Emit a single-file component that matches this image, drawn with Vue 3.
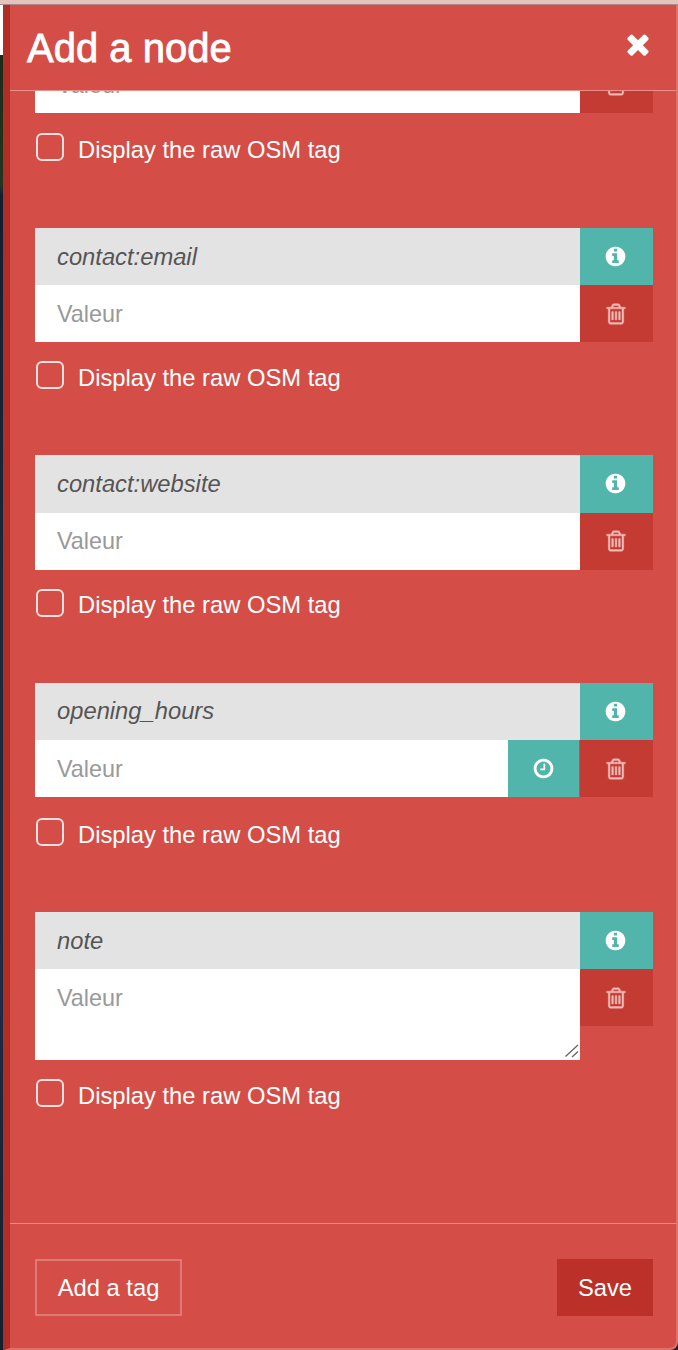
<script setup>
const fields = [
  { key: 'contact:phone', clipped: true },
  { key: 'contact:email' },
  { key: 'contact:website' },
  { key: 'opening_hours', hours: true },
  { key: 'note', multiline: true }
]

const trashPath = 'M704 736v576q0 14-9 23t-23 9h-64q-14 0-23-9t-9-23v-576q0-14 9-23t23-9h64q14 0 23 9t9 23zm256 0v576q0 14-9 23t-23 9h-64q-14 0-23-9t-9-23v-576q0-14 9-23t23-9h64q14 0 23 9t9 23zm256 0v576q0 14-9 23t-23 9h-64q-14 0-23-9t-9-23v-576q0-14 9-23t23-9h64q14 0 23 9t9 23zm128 724v-948h-896v948q0 22 7 40.5t14.5 27 10.5 8.5h832q3 0 10.5-8.5t14.5-27 7-40.5zm-672-1076h448l-48-117q-7-9-17-11h-317q-10 2-17 11zm928 32v64q0 14-9 23t-23 9h-96v948q0 83-47 143.5t-113 60.5h-832q-66 0-113-58.5t-47-141.5v-952h-96q-14 0-23-9t-9-23v-64q0-14 9-23t23-9h309l70-167q15-37 54-63t79-26h320q40 0 79 26t54 63l70 167h309q14 0 23 9t9 23z'
const infoPath = 'M1152 1376v-160q0-14-9-23t-23-9h-96v-512q0-14-9-23t-23-9h-320q-14 0-23 9t-9 23v160q0 14 9 23t23 9h96v320h-96q-14 0-23 9t-9 23v160q0 14 9 23t23 9h448q14 0 23-9t9-23zm-128-896v-160q0-14-9-23t-23-9h-192q-14 0-23 9t-9 23v160q0 14 9 23t23 9h192q14 0 23-9t9-23zm640 416q0 209-103 385.5t-279.5 279.5-385.5 103-385.5-103-279.5-279.5-103-385.5 103-385.5 279.5-279.5 385.5-103 385.5 103 279.5 279.5 103 385.5z'
const clockPath = 'M1024 544v448q0 14-9 23t-23 9h-320q-14 0-23-9t-9-23v-64q0-14 9-23t23-9h224v-352q0-14 9-23t23-9h64q14 0 23 9t9 23zm416 352q0-148-73-273t-198-198-273-73-273 73-198 198-73 273 73 273 198 198 273 73 273-73 198-198 73-273zm224 0q0 209-103 385.5t-279.5 279.5-385.5 103-385.5-103-279.5-279.5-103-385.5 103-385.5 279.5-279.5 385.5-103 385.5 103 279.5 279.5 103 385.5z'
const timesPath = 'M1490 1322q0 40-28 68l-136 136q-28 28-68 28t-68-28l-294-294-294 294q-28 28-68 28t-68-28l-136-136q-28-28-28-68t28-68l294-294-294-294q-28-28-28-68t28-68l136-136q28-28 68-28t68 28l294 294 294-294q28-28 68-28t68 28l136 136q28 28 28 68t-28 68l-294 294 294 294q28 28 28 68z'
</script>

<template>
  <div class="page">
    <div class="top-strip"></div>
    <div class="main">
      <div class="map-edge"></div>
      <div class="modal">
        <header class="modal-head">
          <h1 class="title">Add a node</h1>
          <button class="close" type="button" aria-label="Close">
            <svg viewBox="0 0 1792 1792" width="32" height="32"><path :d="timesPath" fill="#fff" /></svg>
          </button>
        </header>

        <div class="modal-body">
          <div v-for="field in fields" :key="field.key" class="tag" :class="{ first: field.clipped, 'with-hours': field.hours }">
            <div class="tag-grid">
              <template v-if="!field.clipped">
                <div class="tag-key">{{ field.key }}</div>
                <button class="btn-info" type="button">
                  <svg viewBox="0 0 1792 1792" width="23" height="23"><path :d="infoPath" fill="#fff" /></svg>
                </button>
              </template>
              <div v-if="field.multiline" class="area-wrap">
                <textarea class="tag-value tall" placeholder="Valeur"></textarea>
                <svg class="grip" viewBox="0 0 14 14" width="14" height="14">
                  <path d="M0.5 12.5 L13 1 M7 13 L13 7.5" stroke="#666" stroke-width="1.3" fill="none" />
                </svg>
              </div>
              <div v-else class="value-row">
                <input class="tag-value" type="text" placeholder="Valeur" />
                <button v-if="field.hours" class="btn-clock" type="button">
                  <svg viewBox="0 0 1792 1792" width="23" height="23"><path :d="clockPath" fill="#fff" /></svg>
                </button>
              </div>
              <button class="btn-trash" type="button">
                <svg viewBox="0 0 1792 1792" width="24" height="24"><path :d="trashPath" fill="#f3bcb8" stroke="#f3bcb8" stroke-width="30" /></svg>
              </button>
            </div>
            <label class="raw">
              <input class="raw-check" type="checkbox" />
              <span class="raw-text">Display the raw OSM tag</span>
            </label>
          </div>
        </div>

        <footer class="modal-foot">
          <button class="btn-add" type="button">Add a tag</button>
          <button class="btn-save" type="button">Save</button>
        </footer>
      </div>
    </div>
  </div>
</template>

<style scoped>
.page {
  width: 678px;
  height: 1350px;
  display: flex;
  flex-direction: column;
  overflow: hidden;
  background: #1b2533;
  font-family: "Liberation Sans", Arial, sans-serif;
}

.top-strip {
  height: 5px;
  flex: none;
  box-sizing: border-box;
  background: #e3c3bb;
  border-bottom: 1px solid #a58f8a;
}

.main {
  flex: 1;
  display: flex;
  min-height: 0;
}

.map-edge {
  width: 3px;
  flex: none;
  background: linear-gradient(to bottom, #fff 0, #fff 50px, #1d2a18 50px, #25351f 180px, #141e33 190px, #1a2a3c 640px, #202a44 1000px, #14202e 100%);
}

.modal {
  flex: 1;
  display: flex;
  flex-direction: column;
  min-width: 0;
  background: #d44e47;
  border-left: 7px solid #b12d26;
  border-right: 2px solid #df716b;
  border-bottom: 2px solid #df716b;
  border-bottom-right-radius: 8px;
}

.modal-head {
  height: 86px;
  flex: none;
  box-sizing: border-box;
  display: flex;
  align-items: center;
  justify-content: space-between;
  padding: 0 22px 0 17px;
  border-bottom: 1px solid #e88f8a;
  position: relative;
  z-index: 1;
}

.title {
  margin: 0 0 -1px;
  font-size: 40px;
  font-weight: 400;
  color: #fff;
  -webkit-text-stroke: 0.8px #fff;
}

.close {
  border: 0;
  padding: 0;
  background: none;
  display: flex;
  margin-top: -8px;
}

.modal-body {
  flex: 1;
  min-height: 0;
  overflow: hidden;
  padding: 0 23px 0 25px;
}

.tag {
  margin-bottom: 66px;
}

.tag.first {
  margin-top: -35px;
  margin-bottom: 66.8px;
}

.tag-grid {
  display: grid;
  grid-template-columns: 1fr 73px;
  grid-auto-rows: min-content;
}

.tag-key {
  height: 57.2px;
  box-sizing: border-box;
  padding-left: 22px;
  display: flex;
  align-items: center;
  background: #e3e3e3;
  color: #555;
  font-size: 23.75px;
  font-style: italic;
}

.value-row {
  display: flex;
  height: 57.2px;
}

.area-wrap {
  position: relative;
  height: 91px;
}

.grip {
  position: absolute;
  right: 1px;
  bottom: 2px;
}

.tag-value {
  flex: 1;
  min-width: 0;
  height: 57.2px;
  box-sizing: border-box;
  border: 0;
  border-radius: 0;
  outline: 0;
  margin: 0;
  padding: 1px 22px 0;
  background: #fff;
  color: #555;
  font-family: inherit;
  font-size: 23.4px;
  display: block;
}

.tag-value::placeholder {
  color: #999;
  opacity: 1;
}

.tag-value.tall {
  width: 100%;
  height: 91px;
  padding: 16px 22px;
  line-height: 26px;
  resize: none;
}

button {
  font-family: inherit;
  cursor: pointer;
}

.btn-info,
.btn-clock,
.btn-trash {
  border: 0;
  padding: 0;
  border-radius: 0;
  height: 57.2px;
  display: flex;
  align-items: center;
  justify-content: center;
}

.btn-info,
.btn-trash {
  padding-right: 2px;
}

.btn-info,
.btn-clock {
  background: #52b5ac;
}

.btn-clock {
  width: 71px;
  flex: none;
  margin-right: 1px;
  padding-right: 1px;
}

.btn-trash {
  background: #c33b32;
}

.raw {
  display: flex;
  align-items: center;
  gap: 14px;
  height: 28px;
  margin-top: 19px;
  padding-left: 1px;
  color: #fff;
  font-size: 23.75px;
}

.raw-text {
  padding-top: 5px;
}

.tag.first .raw {
  margin-top: 20px;
}

.tag.with-hours .raw {
  margin-top: 21px;
}

.raw-check {
  appearance: none;
  width: 28px;
  height: 28px;
  flex: none;
  margin: 0;
  box-sizing: border-box;
  border: 2px solid #fae0de;
  border-radius: 6px;
  background: none;
}

.modal-foot {
  height: 125px;
  flex: none;
  box-sizing: border-box;
  display: flex;
  align-items: flex-start;
  justify-content: space-between;
  padding: 35px 23px 0 25px;
  border-top: 1px solid #e88f8a;
}

.btn-add,
.btn-save {
  height: 57px;
  border-radius: 0;
  color: #fff;
  font-size: 23.75px;
}

.btn-add {
  width: 147px;
  padding: 0;
  border: 2px solid #df7a74;
  background: none;
}

.btn-save {
  width: 96px;
  padding: 0;
  border: 0;
  background: #bb3029;
}
</style>
